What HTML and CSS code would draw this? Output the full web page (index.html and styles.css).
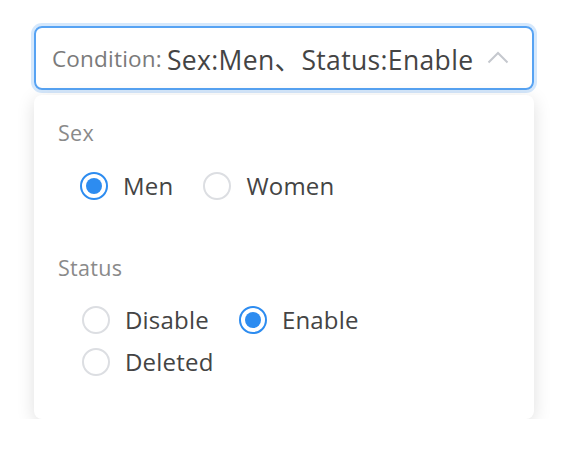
FILE: index.html
```html
<!DOCTYPE html>
<html>
<head>
<meta charset="utf-8">
<link rel="stylesheet" href="styles.css">
</head>
<body>
<div class="wrap">
  <div class="trigger">
    <span class="cond">Condition:</span><span class="value">Sex:Men、Status:Enable</span>
    <svg class="caret" width="22" height="14" viewBox="0 0 22 14"><polyline points="1.5,12.5 11,3 20.5,12.5" fill="none" stroke="#c5c8ce" stroke-width="2"/></svg>
  </div>
  <div class="panel">
    <div class="group">
      <div class="label">Sex</div>
      <div class="options sex">
        <label class="radio checked"><span class="dot"></span><span class="text">Men</span></label>
        <label class="radio"><span class="dot"></span><span class="text">Women</span></label>
      </div>
    </div>
    <div class="group">
      <div class="label">Status</div>
      <div class="options status">
        <label class="radio"><span class="dot"></span><span class="text">Disable</span></label>
        <label class="radio checked"><span class="dot"></span><span class="text">Enable</span></label>
        <label class="radio"><span class="dot"></span><span class="text">Deleted</span></label>
      </div>
    </div>
  </div>
</div>
</body>
</html>
```
FILE: styles.css
```css
* { box-sizing: border-box; }
html, body { margin: 0; background: #fff; }
body { font-family: "Open Sans", "Noto Sans CJK SC", sans-serif; }
.wrap { padding: 26px 0 0 34px; }
.trigger {
  width: 500px; height: 64px;
  border: 2px solid #57a3f3;
  border-radius: 8px;
  box-shadow: 0 0 0 3px rgba(45,140,240,0.2);
  display: flex; align-items: center;
  padding: 0 0 0 16px;
}
.cond { font-size: 22.5px; color: #7a7a7a; margin-right: 5px; letter-spacing: 0.2px; }
.value { font-size: 26.5px; color: #444; letter-spacing: 0.35px; }
.caret { margin-left: 14px; margin-top: -2px; }
.panel {
  margin-top: 5px;
  width: 500px; height: 324px;
  background: #fff;
  border-radius: 8px;
  box-shadow: 0 4px 18px rgba(0,0,0,0.13);
  padding: 24px 0 0 24px;
}
.label { font-size: 21.5px; color: #8a8a8a; line-height: 28px; letter-spacing: 0.3px; }
.options { display: flex; flex-wrap: wrap; }
.sex { padding: 25px 0 0 22px; column-gap: 30px; }
.status { padding: 24px 0 0 24px; width: 340px; column-gap: 30px; row-gap: 14px; }
.group + .group { margin-top: 54px; }
.radio { display: flex; align-items: center; gap: 15px; font-size: 24px; color: #444; line-height: 28px; letter-spacing: 0.2px; }
.dot {
  width: 28px; height: 28px; border-radius: 50%;
  border: 2px solid #dcdee2; background: #fff;
  display: flex; align-items: center; justify-content: center;
}
.checked .dot { border-color: #2d8cf0; }
.checked .dot::after { content: ""; width: 16px; height: 16px; border-radius: 50%; background: #2d8cf0; }
```
